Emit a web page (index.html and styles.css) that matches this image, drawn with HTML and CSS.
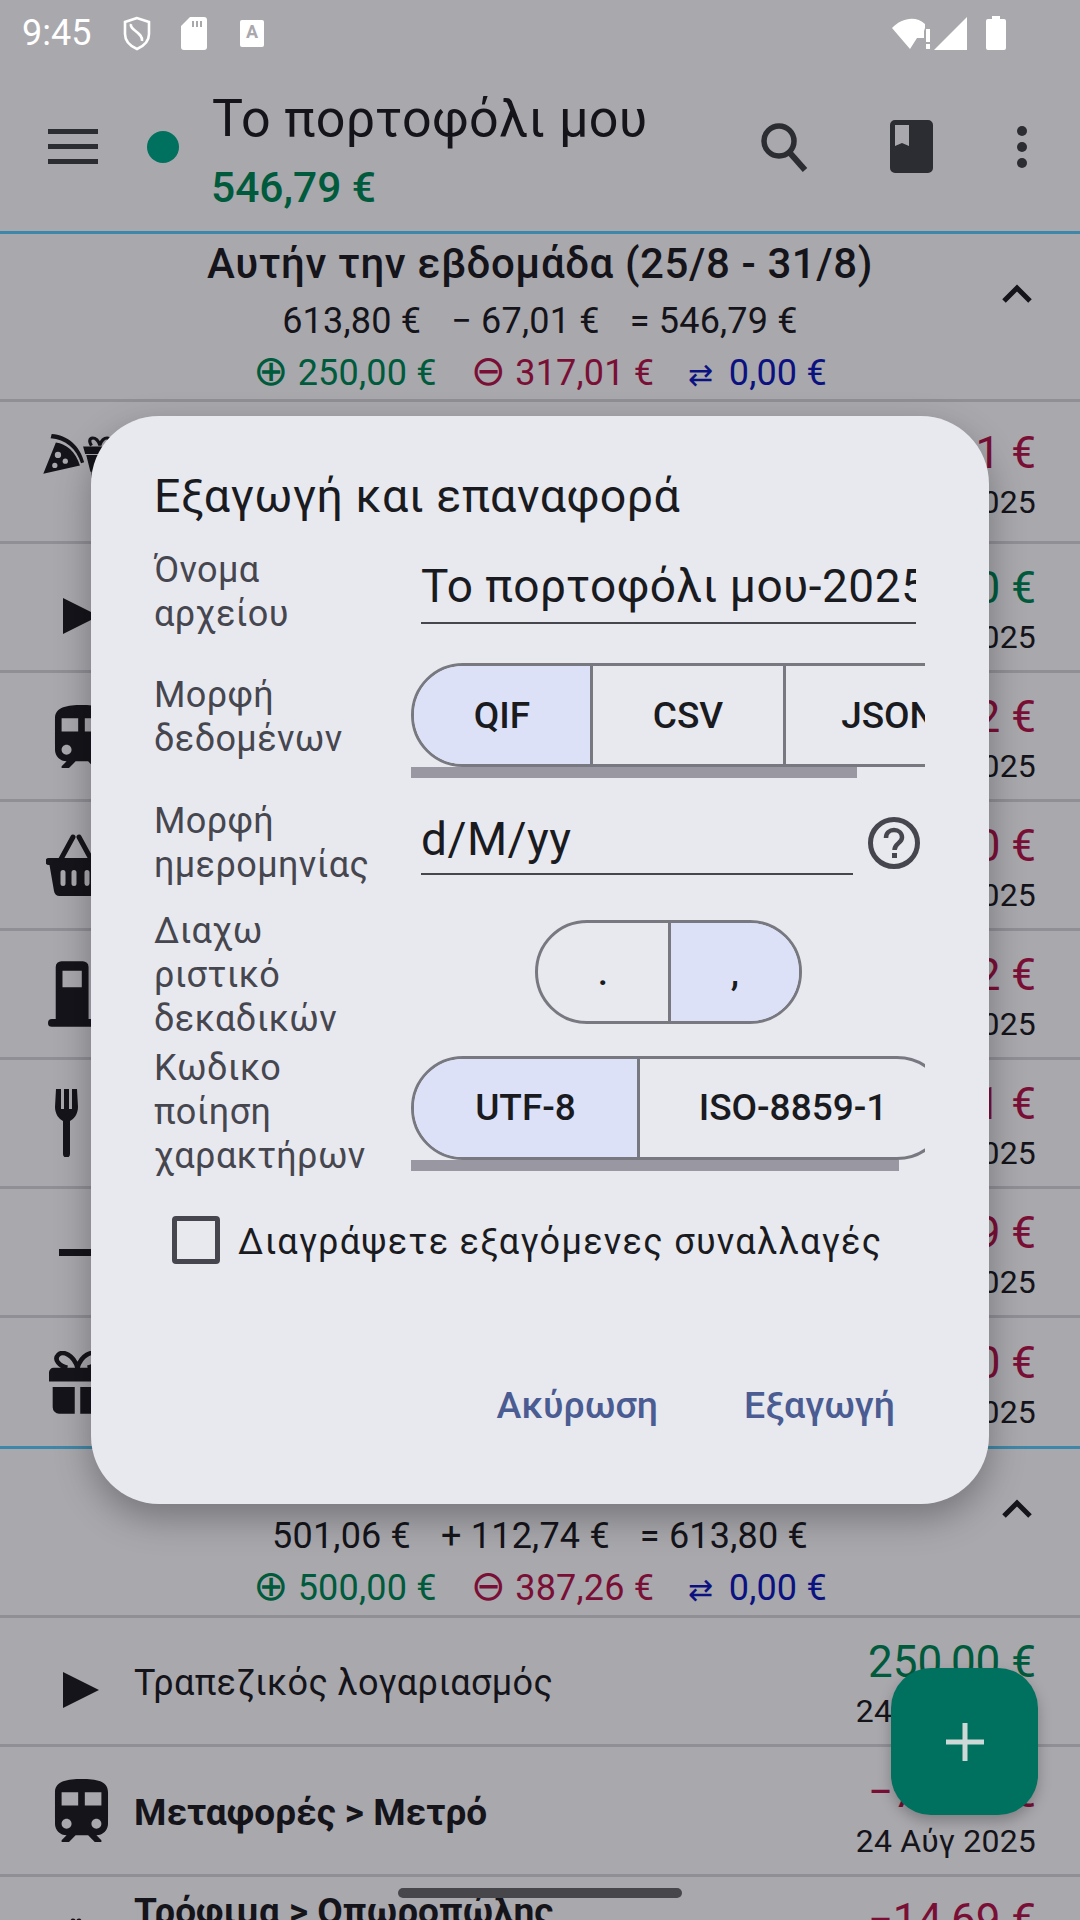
FILE: index.html
```html
<!DOCTYPE html>
<html lang="el">
<head>
  <meta charset="UTF-8" />
  <meta name="viewport" content="width=device-width, initial-scale=1.0" />
  <title>Εξαγωγή και επαναφορά</title>
  <link rel="stylesheet" href="styles.css">
</head>
<body>
  <svg class="defs" width="0" height="0">
    <symbol id="train" viewBox="4 2 16 19">
      <path d="M12 2c-4 0-8 .5-8 4v9.5C4 17.43 5.57 19 7.5 19L6 20.5v.5h2.23l2-2H14l2 2h2v-.5L16.5 19c1.93 0 3.5-1.57 3.5-3.5V6c0-3.5-3.58-4-8-4zM7.5 17c-.83 0-1.5-.67-1.5-1.5S6.67 14 7.5 14s1.5.67 1.5 1.5S8.33 17 7.5 17zm3.5-7H6V6h5v4zm2 0V6h5v4h-5zm3.5 7c-.83 0-1.5-.67-1.5-1.5s.67-1.5 1.500-1.500 1.5.67 1.5 1.5-.67 1.5-1.5 1.5z"/>
    </symbol>
    <symbol id="basket" viewBox="0 0 60 62">
      <path d="M3 24h54a3 3 0 0 1 0 7h-2l-5 26a6 6 0 0 1-6 5H14a6 6 0 0 1-6-5L3.500 31H3a3.500 3.500 0 0 1 0-7zM17 36a2.500 2.500 0 0 0-2.500 2.500v11a2.500 2.500 0 0 0 5 0v-11A2.500 2.500 0 0 0 17 36zm11 0a2.500 2.500 0 0 0-2.500 2.500v11a2.500 2.500 0 0 0 5 0v-11A2.500 2.500 0 0 0 28 36zm13 0a2.500 2.500 0 0 0-2.500 2.500v11a2.500 2.500 0 0 0 5 0v-11A2.500 2.500 0 0 0 41 36z"/>
      <path d="M15 25 27 3M45 25 33 3" fill="none" stroke="currentColor" stroke-width="5" stroke-linecap="round"/>
    </symbol>
  </svg>

  <div class="screen">
    <div class="status-bar">
      <span class="clock">9:45</span>
      <svg class="st-shield" viewBox="0 0 30 35"><path d="M15 2 3 6v12c0 7 5 12 12 15 7-3 12-8 12-15V6z M9 8c-2 6 12 8 11 17" fill="none" stroke="#fff" stroke-width="2.600"/></svg>
      <svg class="st-sd" viewBox="0 0 26 33"><path d="M9 0h14a3 3 0 0 1 3 3v27a3 3 0 0 1-3 3H3a3 3 0 0 1-3-3V9zM11 4v6h2V4zm4 0v6h2V4zm4 0v6h2V4z" fill="#fff" fill-rule="evenodd"/></svg>
      <span class="st-keyboard">A</span>
      <span class="status-spacer"></span>
      <svg class="st-wifi" viewBox="0 0 42 33"><path d="M0 11C9 1 24-2 33 7v4l-1 3v7l-7 0-7 11z" fill="#fff"/><path d="M34 12h4v13h-4zM34 27h4v5h-4z" fill="#fff"/></svg>
      <svg class="st-signal" viewBox="0 0 33 33"><path d="M33 0v33H0z" fill="#fff"/></svg>
      <svg class="st-battery" viewBox="0 0 20 34"><path d="M6 0h8v3h4a2 2 0 0 1 2 2v27a2 2 0 0 1-2 2H2a2 2 0 0 1-2-2V5a2 2 0 0 1 2-2h4z" fill="#fff"/></svg>
    </div>

    <header class="app-bar">
      <div class="hamburger"><span></span><span></span><span></span></div>
      <span class="wallet-dot"></span>
      <div class="wallet">
        <div class="wallet-name">Το πορτοφόλι μου</div>
        <div class="wallet-balance">546,79 €</div>
      </div>
      <svg class="ic-search" viewBox="0 0 48 50"><circle cx="19" cy="19" r="15" fill="none" stroke="#2c2c33" stroke-width="5.500"/><path d="M30 31 45 48" stroke="#2c2c33" stroke-width="6"/></svg>
      <svg class="ic-book" viewBox="0 0 43 53"><path d="M5 0h33a5 5 0 0 1 5 5v43a5 5 0 0 1-5 5H5a5 5 0 0 1-5-5V5a5 5 0 0 1 5-5zm0 5v21l7-3 7 3V5z" fill="#2c2c33" fill-rule="evenodd"/></svg>
      <div class="ic-more"><span></span><span></span><span></span></div>
    </header>

    <section class="week">
      <div class="week-head">
        <div class="week-title">Αυτήν την εβδομάδα (25/8 - 31/8)</div>
        <div class="week-sum"><span>613,80 €</span><span>− 67,01 €</span><span>= 546,79 €</span></div>
        <div class="week-flow">
          <span class="pos"><b>⊕</b> 250,00 €</span><span class="neg"><b>⊖</b> 317,01 €</span><span class="trn"><i>⇄</i> 0,00 €</span>
        </div>
        <svg class="chevron" viewBox="0 0 32 20"><path d="M3 17 16 4l13 13" fill="none" stroke="#14141a" stroke-width="5"/></svg>
      </div>

      <div class="row row-tall">
        <div class="row-icon">
          <svg class="ic-pizza" viewBox="0 0 72 42"><path d="M0 38 12 8c10 1 19 9 23 22zM8 0c15 1 27 11 31 27l-3 1C32 14 21 5 7 4z" fill="#14141a"/><circle cx="14" cy="20" r="3" fill="#a9a8ad"/><circle cx="21" cy="26" r="2.500" fill="#a9a8ad"/><circle cx="11" cy="30" r="2.500" fill="#a9a8ad"/><g transform="translate(-4 0)"><path d="M42 12h30v7H44zM45 20h22l-4 16h-4v6H50v-6h-1z" fill="#14141a"/><path d="M50 11c-6-9 6-10 8 0 2-10 14-9 8 0" fill="none" stroke="#14141a" stroke-width="3"/></g></svg>
        </div>
        <div class="row-title"></div>
        <div class="row-right"><div class="amount neg">−317,01 €</div><div class="date">30 Αύγ 2025</div></div>
      </div>
      <div class="row">
        <div class="row-icon"><svg class="ic-play" viewBox="0 0 36 36"><path d="M0 0 36 18 0 36z" fill="#14141a"/></svg></div>
        <div class="row-title"></div>
        <div class="row-right"><div class="amount pos">250,00 €</div><div class="date">29 Αύγ 2025</div></div>
      </div>
      <div class="row">
        <div class="row-icon"><svg class="ic-train"><use href="#train"/></svg></div>
        <div class="row-title"></div>
        <div class="row-right"><div class="amount neg">−7,32 €</div><div class="date">28 Αύγ 2025</div></div>
      </div>
      <div class="row">
        <div class="row-icon"><svg class="ic-basket"><use href="#basket"/></svg></div>
        <div class="row-title"></div>
        <div class="row-right"><div class="amount neg">−24,50 €</div><div class="date">28 Αύγ 2025</div></div>
      </div>
      <div class="row">
        <div class="row-icon">
          <svg class="ic-fuel" viewBox="0 0 58 68"><path d="M8 6a6 6 0 0 1 6-6h22a6 6 0 0 1 6 6v54h3a4 4 0 0 1 0 8H4a4 4 0 0 1 0-8h4zm7 4v17h20V10z" fill="#14141a" fill-rule="evenodd"/></svg>
        </div>
        <div class="row-title"></div>
        <div class="row-right"><div class="amount neg">−45,32 €</div><div class="date">27 Αύγ 2025</div></div>
      </div>
      <div class="row">
        <div class="row-icon">
          <svg class="ic-fork" viewBox="0 0 48 68"><path d="M1 0h5v20h3V0h5v20h3V0h5l1 18c0 7-4 12-8 14v33a3 3 0 0 1-7 0V32C4 30 0 25 0 18z" fill="#14141a"/><path d="M38 0c6 0 10 8 10 30h-10z" fill="#14141a"/></svg>
        </div>
        <div class="row-title"></div>
        <div class="row-right"><div class="amount neg">−18,41 €</div><div class="date">26 Αύγ 2025</div></div>
      </div>
      <div class="row">
        <div class="row-icon"><span class="ic-minus"></span></div>
        <div class="row-title"></div>
        <div class="row-right"><div class="amount neg">−12,39 €</div><div class="date">26 Αύγ 2025</div></div>
      </div>
      <div class="row row-last">
        <div class="row-icon">
          <svg class="ic-gift" viewBox="0 0 62 68"><path d="M5 18h52a5 5 0 0 1 5 5v10H0V23a5 5 0 0 1 5-5zM4 39h24v29H11a7 7 0 0 1-7-7zM34 39h24v22a7 7 0 0 1-7 7H34z" fill="#14141a"/><path d="M31 18C27 4 15-1 10 4s1 12 10 14M31 18c4-14 16-19 21-14s-1 12-10 14" fill="none" stroke="#14141a" stroke-width="5"/></svg>
        </div>
        <div class="row-title"></div>
        <div class="row-right"><div class="amount neg">−40,00 €</div><div class="date">25 Αύγ 2025</div></div>
      </div>
    </section>

    <section class="week week-second">
      <div class="week-head">
        <div class="week-title"></div>
        <div class="week-sum"><span>501,06 €</span><span>+ 112,74 €</span><span>= 613,80 €</span></div>
        <div class="week-flow">
          <span class="pos"><b>⊕</b> 500,00 €</span><span class="neg"><b>⊖</b> 387,26 €</span><span class="trn"><i>⇄</i> 0,00 €</span>
        </div>
        <svg class="chevron" viewBox="0 0 32 20"><path d="M3 17 16 4l13 13" fill="none" stroke="#14141a" stroke-width="5"/></svg>
      </div>
      <div class="row">
        <div class="row-icon"><svg class="ic-play" viewBox="0 0 36 36"><path d="M0 0 36 18 0 36z" fill="#14141a"/></svg></div>
        <div class="row-title">Τραπεζικός λογαριασμός</div>
        <div class="row-right"><div class="amount pos">250,00 €</div><div class="date">24 Αύγ 2025</div></div>
      </div>
      <div class="row row-metro">
        <div class="row-icon"><svg class="ic-train"><use href="#train"/></svg></div>
        <div class="row-title strong">Μεταφορές &gt; Μετρό</div>
        <div class="row-right"><div class="amount neg">−70,00 €</div><div class="date">24 Αύγ 2025</div></div>
      </div>
      <div class="row row-multi">
        <div class="row-icon"><svg class="ic-basket"><use href="#basket"/></svg></div>
        <div class="row-title strong">Τρόφιμα &gt; Οπωροπώλης</div>
        <div class="row-right"><div class="amount neg">−14,69 €</div><div class="date">24 Αύγ 2025</div></div>
      </div>
    </section>

    <button class="fab">
      <svg viewBox="0 0 38 38"><path d="M19 0v38M0 19h38" stroke="#cdd9d6" stroke-width="5"/></svg>
    </button>
    <div class="home-bar"></div>

    <div class="dialog">
      <h2 class="dialog-title">Εξαγωγή και επαναφορά</h2>

      <div class="form-row form-name">
        <div class="form-label">Όνομα<br>αρχείου</div>
        <div class="text-field"><div class="field-text">Το πορτοφόλι μου-2025-08-31</div></div>
      </div>

      <div class="form-row form-format">
        <div class="form-label">Μορφή<br>δεδομένων</div>
        <div class="toggle-scroll">
          <div class="toggle">
            <div class="seg seg-on seg-qif">QIF</div>
            <div class="seg seg-csv">CSV</div>
            <div class="seg seg-json">JSON</div>
          </div>
          <div class="scroll-thumb thumb-format"></div>
        </div>
      </div>

      <div class="form-row form-date">
        <div class="form-label">Μορφή<br>ημερομηνίας</div>
        <div class="date-field">
          <div class="text-field"><div class="field-text">d/M/yy</div></div>
          <svg class="ic-help" viewBox="0 0 52 52"><circle cx="26" cy="26" r="23.500" fill="none" stroke="#46464f" stroke-width="5"/><path d="M18 21c0-5 3.500-8 8-8s8 3 8 7.500c0 5.500-7.500 6-7.500 12.500" fill="none" stroke="#46464f" stroke-width="4.500"/><rect x="24" y="36" width="5" height="5" fill="#46464f"/></svg>
        </div>
      </div>

      <div class="form-row form-decimal">
        <div class="form-label">Διαχω<br>ριστικό<br>δεκαδικών</div>
        <div class="toggle toggle-small">
          <div class="seg seg-dot">.</div>
          <div class="seg seg-on seg-comma">,</div>
        </div>
      </div>

      <div class="form-row form-encoding">
        <div class="form-label">Κωδικο<br>ποίηση<br>χαρακτήρων</div>
        <div class="toggle-scroll">
          <div class="toggle">
            <div class="seg seg-on seg-utf">UTF-8</div>
            <div class="seg seg-iso">ISO-8859-1</div>
          </div>
          <div class="scroll-thumb thumb-encoding"></div>
        </div>
      </div>

      <div class="check-row">
        <span class="checkbox"></span>
        <span class="check-label">Διαγράψετε εξαγόμενες συναλλαγές</span>
      </div>

      <div class="dialog-actions">
        <button class="text-btn">Ακύρωση</button>
        <button class="text-btn">Εξαγωγή</button>
      </div>
    </div>
  </div>
</body>
</html>
```

FILE: styles.css
```css
* {
  box-sizing: border-box;
}

body {
  margin: 0;
  background: #a9a8ad;
  font-family: Roboto, "DejaVu Sans", sans-serif;
  color: #14141a;
}

.defs {
  position: absolute;
}

.screen {
  position: relative;
  width: 1080px;
  height: 1920px;
  overflow: hidden;
  background: #a9a8ad;
}

/* status bar */
.status-bar {
  height: 66px;
  display: flex;
  align-items: center;
  padding: 0 74px 0 22px;
  color: #fff;
}

.clock {
  font-size: 36px;
  width: 100px;
  line-height: 62px;
}

.st-shield {
  width: 30px;
  height: 35px;
  margin-right: 29px;
}

.st-sd {
  width: 26px;
  height: 33px;
  margin-right: 33px;
}

.st-keyboard {
  width: 24px;
  height: 27px;
  background: #fff;
  color: #a9a8ad;
  border-radius: 2px;
  font-size: 18px;
  font-weight: 700;
  line-height: 24px;
  text-align: center;
}

.status-spacer {
  flex: 1;
}

.st-wifi {
  width: 42px;
  height: 33px;
}

.st-signal {
  width: 33px;
  height: 33px;
}

.st-battery {
  width: 20px;
  height: 34px;
  margin-left: 19px;
}

/* app bar */
.app-bar {
  height: 165px;
  display: flex;
  align-items: center;
  padding: 0 0 4px 48px;
}

.hamburger {
  width: 50px;
  display: flex;
  flex-direction: column;
  gap: 10px;
}

.hamburger span {
  height: 5px;
  background: #2c2c33;
}

.wallet-dot {
  width: 32px;
  height: 32px;
  border-radius: 50%;
  background: #00705f;
  margin-left: 49px;
}

.wallet {
  margin: 10px 0 0 33px;
  width: 548px;
}

.wallet-name {
  font-size: 52px;
  line-height: 62px;
  letter-spacing: 0.4px;
}

.wallet-balance {
  margin-top: 10px;
  margin-left: -1px;
  font-size: 42.5px;
  line-height: 56px;
  font-weight: 500;
  color: #005a3c;
}

.ic-search {
  width: 48px;
  height: 50px;
}

.ic-book {
  width: 43px;
  height: 53px;
  margin-left: 82px;
}

.ic-more {
  margin-left: 84px;
  display: flex;
  flex-direction: column;
  gap: 6px;
}

.ic-more span {
  width: 10px;
  height: 10px;
  border-radius: 50%;
  background: #2c2c33;
}

/* week sections */
.week {
  border-top: 3px solid #3f87a8;
}

.week-head {
  position: relative;
  height: 168px;
  border-bottom: 3px solid #918f96;
  text-align: center;
}

.week-second .week-head {
  height: 169px;
}

.week-title {
  height: 61px;
  padding-top: 4px;
  font-size: 42px;
  line-height: 52px;
  font-weight: 500;
  letter-spacing: 0.6px;
}

.week-sum,
.week-flow {
  display: flex;
  justify-content: center;
  gap: 30px;
  font-size: 36px;
  line-height: 52px;
  letter-spacing: 0.2px;
}

.week-flow {
  gap: 34px;
}

.week-flow b {
  font-weight: 400;
  font-size: 42px;
  line-height: 40px;
}

.week-flow i {
  font-style: normal;
  font-size: 30px;
  line-height: 40px;
  margin-right: 6px;
}

.chevron {
  position: absolute;
  right: 47px;
  top: 50px;
  width: 32px;
  height: 20px;
}

.pos {
  color: #005a3c;
}

.neg {
  color: #7a0f36;
}

.trn {
  color: #0b1280;
}

.row {
  height: 129px;
  display: flex;
  align-items: center;
  border-bottom: 3px solid #918f96;
  padding-right: 44px;
}

.row-tall {
  height: 142px;
}

.row-tall .row-icon {
  margin-bottom: 32px;
}

.row-last {
  height: 128px;
  border-bottom: none;
}

.row-metro {
  height: 130px;
}

.row-multi {
  height: 180px;
  align-items: flex-start;
  padding-top: 9px;
}

.row-multi .row-icon {
  margin-top: 32px;
}

.row-icon {
  width: 134px;
  flex-shrink: 0;
  display: flex;
  justify-content: center;
  padding-left: 28px;
}

.row-title {
  flex: 1;
  font-size: 36px;
  letter-spacing: 0.4px;
  padding-top: 4px;
}

.strong {
  font-size: 37px;
  font-weight: 700;
  letter-spacing: 0;
}

.row-right {
  text-align: right;
  padding-top: 8px;
}

.amount {
  font-size: 44px;
  line-height: 52px;
}

.date {
  font-size: 32px;
  line-height: 46px;
  letter-spacing: 0.2px;
}

.ic-play {
  width: 36px;
  height: 36px;
  margin-top: 18px;
}

.ic-train {
  width: 55px;
  height: 63px;
  fill: #14141a;
}

.ic-basket {
  width: 60px;
  height: 62px;
  margin-left: -10px;
  fill: #14141a;
  color: #14141a;
}

.ic-pizza {
  width: 76px;
  height: 44px;
}

.ic-fuel {
  width: 56px;
  height: 66px;
  margin-left: -10px;
}

.ic-fork {
  width: 48px;
  height: 68px;
  margin-left: -4px;
}

.ic-minus {
  width: 44px;
  height: 7px;
  background: #14141a;
}

.ic-gift {
  width: 57px;
  height: 63px;
  margin-left: -8px;
}

/* floating bits */
.fab {
  position: absolute;
  left: 891px;
  top: 1668px;
  width: 147px;
  height: 147px;
  border: none;
  border-radius: 40px;
  background: #00705f;
  box-shadow: 0 6px 14px rgba(0, 0, 0, 0.25);
  display: flex;
  align-items: center;
  justify-content: center;
}

.fab svg {
  width: 38px;
  height: 38px;
}

.home-bar {
  position: absolute;
  left: 398px;
  top: 1888px;
  width: 284px;
  height: 10px;
  border-radius: 5px;
  background: #47474b;
}

/* dialog */
.dialog {
  position: absolute;
  left: 91px;
  top: 416px;
  width: 898px;
  height: 1088px;
  padding: 0 64px;
  border-radius: 68px;
  background: #e8e8ef;
  box-shadow: 0 14px 36px rgba(0, 0, 0, 0.3);
  display: flex;
  flex-direction: column;
}

.dialog-title {
  margin: 50px 0 0 -1px;
  height: 60px;
  font-size: 46.5px;
  line-height: 60px;
  font-weight: 400;
  letter-spacing: 0.5px;
  color: #1a1b21;
}

.form-row {
  display: flex;
  align-items: center;
}

.form-label {
  width: 256px;
  flex-shrink: 0;
  margin-left: -1px;
  margin-right: 1px;
  font-size: 36px;
  line-height: 44px;
  letter-spacing: 0.4px;
  color: #46464f;
}

.form-name {
  margin-top: 22px;
}

.form-name .field-text {
  line-height: 52px;
  padding-bottom: 10px;
}

.form-format {
  margin-top: 27px;
}

.form-format .form-label {
  padding-bottom: 7px;
}

.form-date {
  margin-top: 21px;
}

.date-field .field-text {
  line-height: 56px;
  padding-bottom: 6px;
}

.form-decimal {
  margin-top: 22px;
}

.form-encoding {
  margin-top: 5px;
}

.form-encoding .toggle-scroll {
  margin-top: 2px;
}

.text-field {
  margin-left: 10px;
  width: 495px;
  border-bottom: 2px solid #46464f;
  overflow: hidden;
}

.field-text {
  white-space: nowrap;
  font-size: 46px;
  letter-spacing: 0.5px;
  color: #1a1b21;
}

.date-field {
  display: flex;
  align-items: center;
  width: 515px;
}

.date-field .text-field {
  width: 432px;
}

.ic-help {
  width: 52px;
  height: 52px;
  margin-left: 15px;
}

.toggle-scroll {
  position: relative;
  width: 515px;
  height: 115px;
  overflow: hidden;
}

.toggle {
  display: flex;
  width: max-content;
  height: 104px;
  border: 3px solid #787880;
  border-radius: 52px;
  overflow: hidden;
}

.toggle-small {
  margin: 0 0 6px 124px;
}

.seg {
  display: flex;
  align-items: center;
  justify-content: center;
  font-size: 37px;
  font-weight: 500;
  color: #1a1b21;
  border-right: 3px solid #787880;
}

.seg:last-child {
  border-right: none;
}

.seg-on {
  background: #dde1f8;
}

.seg-qif {
  width: 179px;
}

.seg-csv {
  width: 193px;
}

.seg-json {
  width: 205px;
}

.seg-utf {
  width: 226px;
}

.seg-iso {
  width: 306px;
}

.seg-dot {
  width: 133px;
}

.seg-comma {
  width: 128px;
}

.scroll-thumb {
  position: absolute;
  left: 0;
  bottom: 0;
  height: 11px;
  background: #9897a2;
}

.thumb-format {
  width: 446px;
}

.thumb-encoding {
  width: 488px;
}

.check-row {
  display: flex;
  align-items: center;
  margin-top: 38px;
  padding-left: 17px;
}

.checkbox {
  width: 48px;
  height: 48px;
  border: 5px solid #46464f;
  border-radius: 4px;
  margin-right: 18px;
}

.check-label {
  font-size: 36px;
  letter-spacing: 1.3px;
  padding-top: 4px;
  color: #1a1b21;
}

.dialog-actions {
  display: flex;
  justify-content: flex-end;
  gap: 86px;
  margin-top: 119px;
  padding-right: 30px;
}

.text-btn {
  border: none;
  background: none;
  padding: 0;
  font-family: inherit;
  font-size: 37.5px;
  font-weight: 500;
  color: #4a5c92;
}
```
